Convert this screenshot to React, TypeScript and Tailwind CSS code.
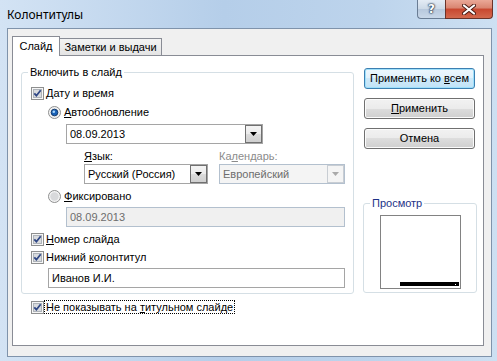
import React from "react";

function Check() {
  return (
    <svg width="13" height="13" viewBox="0 0 13 13" className="block shrink-0">
      <rect x="0.5" y="0.5" width="12" height="12" fill="#f6f6f6" stroke="#8e8f8f" />
      <rect x="2.5" y="2.5" width="8" height="8" fill="#d9dbde" stroke="#aeb3b9" />
      <path d="M3.3 6.3 L5.4 8.7 L9.7 3.2" fill="none" stroke="#2f4785" strokeWidth="1.8" />
    </svg>
  );
}

function Radio({ on }: { on?: boolean }) {
  return (
    <svg width="13" height="13" viewBox="0 0 13 13" className="block shrink-0">
      <circle cx="6.5" cy="6.5" r="6" fill="#f4f4f4" stroke="#8e8f8f" />
      <circle cx="6.5" cy="6.5" r="4.2" fill="#d8d9db" />
      {on && (
        <>
          <circle cx="6.5" cy="6.5" r="3.3" fill="#1a62b8" stroke="#0d3569" strokeWidth="0.9" />
          <circle cx="5.8" cy="5.7" r="1.3" fill="#a6d6fa" />
        </>
      )}
    </svg>
  );
}

function Tri({ color }: { color: string }) {
  return (
    <svg width="7" height="4" viewBox="0 0 7 4" className="block">
      <polygon points="0,0 7,0 3.5,4" fill={color} />
    </svg>
  );
}

function Combo({ w, text, disabled }: { w: string; text: string; disabled?: boolean }) {
  return (
    <div
      className={
        "flex h-[20px] items-stretch border " +
        w +
        (disabled ? " border-[#b3c0ce] bg-[#f4f4f4] text-[#6d6d6d]" : " border-[#a5a5a5] bg-white text-black")
      }
    >
      <span className="flex-1 pl-[3px] leading-[18px]">{text}</span>
      {disabled ? (
        <div className="flex w-[17px] items-center justify-center border border-[#c8cdd3] bg-[#f4f4f4]">
          <Tri color="#a9a9a9" />
        </div>
      ) : (
        <div className="flex w-[17px] items-center justify-center border border-[#707070] bg-[linear-gradient(#f4f4f4,#ebebeb_50%,#dcdcdc_50%,#cfcfcf)]">
          <Tri color="#000000" />
        </div>
      )}
    </div>
  );
}

function Btn({ children, def }: { children: React.ReactNode; def?: boolean }) {
  return (
    <div
      className={
        "flex h-[21px] w-[111px] items-center justify-center rounded-[3px] border leading-[13px] " +
        (def
          ? "border-[#3c7fb1] bg-[linear-gradient(#eef7fd,#e0f1fc_50%,#cde9f9_50%,#c2e3f7)] shadow-[inset_0_0_0_1px_#9ee0fb]"
          : "border-[#707070] bg-[linear-gradient(#f2f2f2,#ebebeb_50%,#dddddd_50%,#cfcfcf)] shadow-[inset_0_0_0_1px_#fbfbfb]")
      }
    >
      <span>{children}</span>
    </div>
  );
}

export default function App() {
  return (
    <div className="flex h-[361px] w-[497px] flex-col overflow-hidden bg-[linear-gradient(90deg,#d3e3f4,#b5cee9_45%,#bdd4ec_75%,#cde0f2)] font-['Liberation_Sans',sans-serif] text-[11px] text-black">
      {/* title bar */}
      <div className="flex h-[28px] shrink-0 items-start">
        <div className="mt-[7px] pl-[7px] font-['Noto_Sans',sans-serif] text-[12px] leading-[16px] text-black">
          Колонтитулы
        </div>
        <div className="ml-auto mr-[4px] flex h-[19px]">
          <div className="flex w-[28px] items-center justify-center rounded-bl-[4px] border border-t-0 border-r-0 border-[#6a7d94] bg-[linear-gradient(#e4ecf5,#ccd9e7_50%,#b7c8dc_50%,#c9d8e9)]">
            <span className="font-['DejaVu_Sans',sans-serif] text-[12px] font-bold leading-[12px] text-white [text-shadow:0_0_1px_#1d3149,0_0_2px_#1d3149,0_0_2px_#1d3149]">
              ?
            </span>
          </div>
          <div className="flex w-[48px] items-center justify-center rounded-br-[4px] border border-t-0 border-[#6b3329] bg-[linear-gradient(#eaa897,#d98470_45%,#c8472f_50%,#d3694e)]">
            <svg width="14" height="11" viewBox="0 0 14 11" className="block">
              <path d="M2 1.5 L12 9.5 M12 1.5 L2 9.5" stroke="#4a1a12" strokeWidth="4" strokeLinecap="round" />
              <path d="M2 1.5 L12 9.5 M12 1.5 L2 9.5" stroke="#ffffff" strokeWidth="2.2" strokeLinecap="round" />
            </svg>
          </div>
        </div>
      </div>

      {/* client area */}
      <div className="ml-[7px] mr-[5px] flex h-[329px] shrink-0 flex-col border border-[#7f93ab] bg-[#f0f0f0] pb-[10px] pl-[4px] pr-[7px] pt-[7px]">
        {/* tabs */}
        <div className="flex h-[19px] shrink-0 items-end">
          <div className="relative z-10 -mb-px flex h-[20px] w-[48px] items-center justify-center border border-b-0 border-[#898c95] bg-white leading-[13px]">
            Слайд
          </div>
          <div className="-ml-px flex h-[17px] w-[103px] items-center justify-center border border-b-0 border-[#898c95] bg-[linear-gradient(#f3f3f3,#e4e4e4)] pt-[1px] leading-[13px]">
            Заметки и выдачи
          </div>
        </div>

        {/* panel */}
        <div className="flex flex-1 border border-[#898c95] bg-white">
          {/* left column */}
          <div className="flex flex-col pl-[8px]">
            <div className="relative mt-[16px] flex h-[222px] w-[333px] flex-col rounded-[3px] border border-[#d5dfe5] pl-[9px]">
              <span className="absolute left-[6px] top-[-8px] bg-white px-[2px] leading-[14px]">Включить в слайд</span>

              <div className="mt-[14px] flex items-center">
                <Check />
                <span className="ml-[2px] leading-[13px]">
                  <span className="underline">Д</span>ату и время
                </span>
              </div>

              <div className="ml-[17px] mt-[6px] flex items-center">
                <Radio on />
                <span className="ml-[3px] leading-[13px]">
                  <span className="underline">А</span>втообновление
                </span>
              </div>

              <div className="ml-[35px] mt-[5px]">
                <Combo w="w-[197px]" text="08.09.2013" />
              </div>

              <div className="ml-[53px] mt-[6px] flex gap-[11px]">
                <div className="flex flex-col">
                  <span className="leading-[13px]">
                    <span className="underline">Я</span>зык:
                  </span>
                  <div className="mt-[1px]">
                    <Combo w="w-[124px]" text="Русский (Россия)" />
                  </div>
                </div>
                <div className="flex flex-col">
                  <span className="leading-[13px] text-[#8b8b8b]">
                    Ка<span className="underline">л</span>ендарь:
                  </span>
                  <div className="mt-[1px]">
                    <Combo w="w-[126px]" text="Европейский" disabled />
                  </div>
                </div>
              </div>

              <div className="ml-[17px] mt-[6px] flex items-center">
                <Radio />
                <span className="ml-[3px] leading-[13px]">
                  <span className="underline">Ф</span>иксировано
                </span>
              </div>

              <div className="ml-[35px] mt-[4px] flex h-[20px] w-[279px] items-center border border-[#b3c0ce] bg-[#f0f0f0] pl-[3px] text-[#6d6d6d]">
                08.09.2013
              </div>

              <div className="mt-[6px] flex items-center">
                <Check />
                <span className="ml-[2px] leading-[13px]">
                  <span className="underline">Н</span>омер слайда
                </span>
              </div>

              <div className="mt-[5px] flex items-center">
                <Check />
                <span className="ml-[2px] leading-[13px]">
                  Нижний <span className="underline">к</span>олонтитул
                </span>
              </div>

              <div className="ml-[17px] mt-[4px] flex h-[20px] w-[297px] items-center border border-[#a5a5a5] bg-white pl-[3px]">
                Иванов И.И.
              </div>
            </div>

            <div className="ml-[10px] mt-[6px] flex items-center">
              <Check />
              <span className="border border-dotted border-black px-[1px] leading-[12px]">
                Не показывать на <span className="underline">т</span>итульном слайде
              </span>
            </div>
          </div>

          {/* right column */}
          <div className="ml-[10px] mt-[12px] flex flex-col">
            <Btn def>
              Применить ко <span className="underline">в</span>сем
            </Btn>
            <div className="mt-[9px]">
              <Btn>
                <span className="underline">П</span>рименить
              </Btn>
            </div>
            <div className="mt-[9px]">
              <Btn>Отмена</Btn>
            </div>

            <div className="relative -ml-px mt-[54px] flex h-[90px] w-[114px] flex-col rounded-[3px] border border-[#d5dfe5]">
              <span className="absolute left-[6px] top-[-8px] bg-white px-[2px] leading-[14px] text-[#1e3287]">Просмотр</span>
              <div className="ml-[16px] mt-[11px] flex h-[74px] w-[81px] items-end justify-end border border-[#828282] bg-white pb-[2px] pr-[1px]">
                <div className="relative h-[4px] w-[59px] bg-black">
                  <div className="absolute right-[3px] top-[2px] h-[1px] w-[1px] bg-white" />
                </div>
              </div>
            </div>
          </div>
        </div>
      </div>
    </div>
  );
}
